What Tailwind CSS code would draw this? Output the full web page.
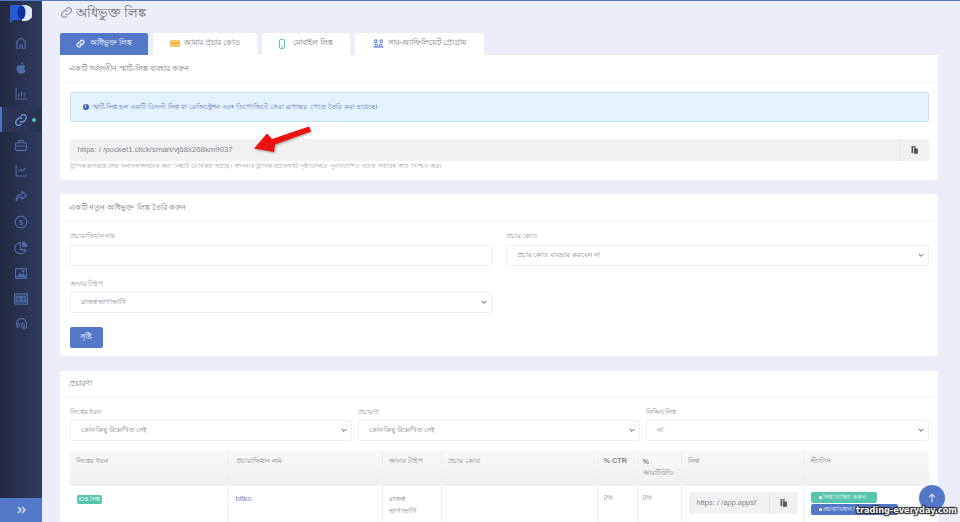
<!DOCTYPE html>
<html lang="bn">
<head>
<meta charset="utf-8">
<script src="https://cdn.jsdelivr.net/npm/@tailwindcss/browser@4"></script>
</head>
<body class="h-[522px] w-[960px] overflow-hidden bg-[#ebeef8] font-['Liberation_Sans','Noto_Sans',sans-serif] text-[#777a80]">
<div class="relative flex h-[522px] w-[960px] overflow-hidden border-t-[1.5px] border-[#5478c8]">
  <aside class="flex h-full w-[42px] shrink-0 flex-col bg-gradient-to-r from-[#222840] to-[#2e3d5f] text-[#4f6ba8]">
    <div class="flex h-[29px] items-start justify-center pt-[4px]">
      <svg width="22" height="18" viewBox="0 0 22 18"><path d="M12 0h3a8 8 0 0 1 0 16h-3z" fill="#dfe8fb"/><path d="M0 0h12v15l-9 0-3 3z" fill="#2a5bd7"/><ellipse cx="11.500" cy="7.500" rx="4" ry="7" fill="#0f2f9e"/></svg>
    </div>
    <nav class="flex flex-col">
      <a class="flex h-[25.6px] items-center justify-center"><svg width="14" height="14" viewBox="0 0 24 24" fill="none" stroke="currentColor" stroke-width="2"><path d="M3 11l9-8 9 8M5 9v12h5v-6h4v6h5V9"/></svg></a>
      <a class="flex h-[25.6px] items-center justify-center"><svg width="13" height="14" viewBox="0 0 24 24" fill="currentColor"><path d="M17 12.500c0-2.600 2.100-3.800 2.200-3.900-1.200-1.800-3.100-2-3.800-2-1.600-.2-3.100 1-3.900 1s-2-.9-3.400-.9C6.300 6.700 4.700 7.700 3.800 9.200c-1.800 3.200-.5 7.900 1.300 10.500.9 1.300 1.900 2.700 3.300 2.600 1.300 0 1.800-.8 3.400-.8s2 .8 3.400.8 2.300-1.300 3.200-2.600c1-1.500 1.400-2.900 1.400-3-.1 0-2.800-1.100-2.800-4.200zM14.400 4.700c.7-.9 1.200-2.100 1.100-3.300-1 0-2.300.7-3 1.500-.7.800-1.200 2-1.100 3.200 1.200.1 2.300-.5 3-1.400z"/></svg></a>
      <a class="flex h-[25.6px] items-center justify-center"><svg width="13" height="13" viewBox="0 0 24 24" fill="none" stroke="currentColor" stroke-width="2"><path d="M2 2v20h20M7 18v-6M12 18V8M17 18v-8"/></svg></a>
      <a class="relative flex h-[25.6px] items-center justify-center border-l-2 border-[#4f73c4] bg-[#2b3553] pr-[2px] text-[#6f8fd6]"><svg width="14" height="14" viewBox="0 0 24 24" fill="none" stroke="currentColor" stroke-width="2.400"><path d="M10 14a5 5 0 0 0 7 0l3-3a5 5 0 0 0-7-7l-1.500 1.500"/><path d="M14 10a5 5 0 0 0-7 0l-3 3a5 5 0 0 0 7 7l1.500-1.500"/></svg><span class="absolute left-[30px] top-[11px] size-1 rounded-full bg-[#4fc9a8]"></span></a>
      <a class="flex h-[25.6px] items-center justify-center"><svg width="14" height="13" viewBox="0 0 24 24" fill="none" stroke="currentColor" stroke-width="2"><rect x="2" y="7" width="20" height="14" rx="2"/><path d="M8 7V3h8v4M2 13h20"/></svg></a>
      <a class="flex h-[25.6px] items-center justify-center"><svg width="13" height="13" viewBox="0 0 24 24" fill="none" stroke="currentColor" stroke-width="2"><path d="M2 2v20h20M6 15l5-5 3 3 6-6"/></svg></a>
      <a class="flex h-[25.6px] items-center justify-center"><svg width="14" height="13" viewBox="0 0 24 24" fill="none" stroke="currentColor" stroke-width="2.200"><path d="M14 3l8 7-8 7v-4c-5 0-8 1-11 7 0-7 4-12 11-13z"/></svg></a>
      <a class="flex h-[25.6px] items-center justify-center"><svg width="14" height="14" viewBox="0 0 24 24" fill="none" stroke="currentColor" stroke-width="2"><circle cx="12" cy="12" r="10"/><text x="12" y="17" text-anchor="middle" font-size="13" font-family="Liberation Sans" fill="currentColor" stroke="none" font-weight="700">$</text></svg></a>
      <a class="flex h-[25.6px] items-center justify-center"><svg width="14" height="14" viewBox="0 0 24 24" fill="none" stroke="currentColor" stroke-width="2.200"><path d="M11 3a9.500 9.500 0 1 0 9 12h-9z"/><path d="M15 2a7 7 0 0 1 7 7h-7z" fill="currentColor"/></svg></a>
      <a class="flex h-[25.6px] items-center justify-center"><svg width="14" height="13" viewBox="0 0 24 24" fill="none" stroke="currentColor" stroke-width="2"><rect x="2" y="3" width="20" height="18" rx="1"/><path d="M5 18l5-6 3 3 3-2 4 5z" fill="currentColor"/><circle cx="16" cy="8" r="1.500" fill="currentColor"/></svg></a>
      <a class="flex h-[25.6px] items-center justify-center"><svg width="14" height="12" viewBox="0 0 24 20" fill="none" stroke="currentColor" stroke-width="2"><rect x="1" y="1" width="22" height="18" rx="1" fill="currentColor" fill-opacity=".4"/><rect x="5" y="6" width="6" height="8"/><rect x="13" y="6" width="6" height="8"/></svg></a>
      <a class="flex h-[25.6px] items-center justify-center"><svg width="13" height="14" viewBox="0 0 24 24" fill="none" stroke="currentColor" stroke-width="2.200"><path d="M3 14v-3a9 9 0 0 1 18 0v5a4 4 0 0 1-4 4h-3"/><rect x="3" y="11" width="5" height="7" rx="2"/><rect x="12" y="11" width="5" height="7" rx="2"/></svg></a>
    </nav>
    <div class="mt-auto flex h-[24px] items-center justify-center bg-[#5478c8] text-[#e6ecfa]"><svg width="9" height="8" viewBox="0 0 18 16" fill="none" stroke="currentColor" stroke-width="2.600"><path d="M2 2l6 6-6 6M10 2l6 6-6 6"/></svg></div>
  </aside>

  <main class="min-w-0 flex-1 pl-[18px] pr-[22px]">
    <div class="flex h-[31.5px] items-start gap-[3px] pt-[4px] text-[12.500px] leading-[16px] text-[#64686e]">
      <svg class="mt-[1px]" width="13" height="13" viewBox="0 0 24 24" fill="none" stroke="#8a93a5" stroke-width="2.200"><path d="M10 14a5 5 0 0 0 7 0l3-3a5 5 0 0 0-7-7l-1.500 1.500"/><path d="M14 10a5 5 0 0 0-7 0l-3 3a5 5 0 0 0 7 7l1.500-1.500"/></svg>
      <h1>অধিভুক্ত লিঙ্ক</h1>
    </div>
    <div class="flex h-[22px] gap-[5px] text-[8.200px]">
      <a class="flex w-[88px] items-center justify-center gap-[5px] rounded-t-[2px] bg-[#5478c8] text-white"><svg width="9" height="9" viewBox="0 0 24 24" fill="none" stroke="currentColor" stroke-width="3"><path d="M10 14a5 5 0 0 0 7 0l3-3a5 5 0 0 0-7-7l-1.500 1.500"/><path d="M14 10a5 5 0 0 0-7 0l-3 3a5 5 0 0 0 7 7l1.500-1.500"/></svg>অধিভুক্ত লিঙ্ক</a>
      <a class="flex w-[104px] items-center justify-center gap-[4px] rounded-t-[2px] bg-white"><svg width="10" height="7" viewBox="0 0 20 14"><rect width="20" height="14" rx="1" fill="#f7c86c"/><rect x="0" y="5" width="20" height="3" fill="#eeb04a"/></svg>আমার প্রচার কোড</a>
      <a class="flex w-[88px] items-center justify-center gap-[8px] rounded-t-[2px] bg-white"><svg width="6" height="10" viewBox="0 0 12 20" fill="none" stroke="#58c6ac" stroke-width="2"><rect x="1" y="1" width="10" height="18" rx="2"/><path d="M4 16h4"/></svg>মোবাইল লিঙ্ক</a>
      <a class="flex w-[129px] items-center justify-center gap-[4px] rounded-t-[2px] bg-white"><svg width="11" height="9" viewBox="0 0 24 20" fill="none" stroke="#6f8fd6" stroke-width="2.400"><circle cx="6" cy="5" r="3"/><circle cx="18" cy="5" r="3"/><circle cx="7" cy="14" r="3"/><circle cx="17" cy="14" r="3"/><path d="M1 19c1-2 10-2 11 0M12 19c1-2 10-2 11 0"/></svg>সাব-অ্যাফিলিয়েট প্রোগ্রাম</a>
    </div>

    <section class="rounded-b-[2px] bg-white">
      <header class="flex h-[28px] items-center border-b border-[#f4f5f8] px-[9px] pt-[1px] text-[7.800px]">একটি সর্বজনীন স্মার্ট-লিঙ্ক ব্যবহার করুন</header>
      <div class="px-[9.500px] pt-[9px]">
        <div class="flex h-[30px] items-center gap-[3px] rounded-[2px] border border-[#bee5f7] bg-[#e4f2fd] pl-[12px] text-[7.400px] text-[#5f78b5]">
          <span class="flex size-[6px] items-center justify-center rounded-full bg-[#3f62ad] text-[5px] font-bold text-white">i</span>
          স্মার্ট-লিঙ্ক হল একটি ডিফল্ট লিঙ্ক যা রেজিস্ট্রেশন এবং ডিপোজিটে সেরা রূপান্তর পেতে তৈরি করা হয়েছে।
        </div>
        <div class="mt-[17px] flex h-[22px] rounded-[2px] bg-[#f1f1f1]">
          <div class="flex flex-1 items-center pl-[8px] text-[7.800px] text-[#85888e]">https: / /pocket1.click/smart/vj68x268km9037</div>
          <div class="flex w-[30px] items-center justify-center border-l border-[#e8e8e8]"><svg width="9" height="10" viewBox="0 0 24 24" fill="#555"><path d="M4 2h12v3H8v15H4z"/><path d="M10 7h8l3 3v12H10z"/></svg></div>
        </div>
        <p class="pb-[10px] text-[6.200px] leading-[9px] text-[#a0a3a8]">ট্রাফিক রূপান্তরে সেরা ফলাফল অর্জনের জন্য লিঙ্কটি তৈরি করা হয়েছে। আপনার ট্রাফিক ওয়েবসাইট পৃষ্ঠাগুলিতে পুনর্নির্দেশিত হবে যা সর্বাধিক আয় নিশ্চিত করে।</p>
      </div>
    </section>

    <section class="mt-[14px] h-[162px] rounded-[2px] bg-white">
      <header class="flex h-[27px] items-center border-b border-[#f4f5f8] px-[9px] pt-[2px] text-[7.900px]">একটি নতুন অধিভুক্ত লিঙ্ক তৈরি করুন</header>
      <div class="px-[9.500px] pt-[7px]">
        <div class="grid grid-cols-[422px_423px] gap-x-[14px]">
          <div>
            <label class="block h-[17px] text-[7px] leading-[15px] text-[#8f9298]">প্রচারাভিযান নাম</label>
            <div class="h-[21px] rounded-[2px] border border-[#eef0f3]"></div>
          </div>
          <div>
            <label class="block h-[17px] text-[7px] leading-[15px] text-[#8f9298]">প্রচার কোড</label>
            <div class="flex h-[21px] items-center justify-between rounded-[2px] border border-[#eef0f3] pl-[10px] pr-[3px] text-[7.100px] text-[#808389]">প্রচার কোড ব্যবহার করবেন না<svg width="8" height="8" viewBox="0 0 24 24" fill="none" stroke="#555" stroke-width="3"><path d="M5 9l7 7 7-7"/></svg></div>
          </div>
          <div class="mt-[10px]">
            <label class="block h-[16px] text-[7px] leading-[16px] text-[#8f9298]">অফার টাইপ</label>
            <div class="flex h-[21px] items-center justify-between rounded-[2px] border border-[#eef0f3] pl-[10px] pr-[3px] text-[7.100px] text-[#808389]">রাজস্ব ভাগাভাগি<svg width="8" height="8" viewBox="0 0 24 24" fill="none" stroke="#555" stroke-width="3"><path d="M5 9l7 7 7-7"/></svg></div>
          </div>
        </div>
        <button class="mt-[14px] h-[21px] w-[33px] rounded-[2px] bg-[#5478c8] text-[7.500px] text-white">সৃষ্টি</button>
      </div>
    </section>

    <section class="mt-[15px] rounded-[2px] bg-white">
      <header class="flex h-[26px] items-center border-b border-[#f4f5f8] px-[9px] pt-[1px] text-[7.500px]">প্রচারণা</header>
      <div class="px-[9.500px] pt-[7px]">
        <div class="grid grid-cols-[282px_282px_283px] gap-x-[6px]">
          <div>
            <label class="block h-[16px] text-[7px] leading-[15px] text-[#8f9298]">লিঙ্কের ধরন</label>
            <div class="flex h-[21px] items-center justify-between rounded-[2px] border border-[#eef0f3] pl-[10px] pr-[3px] text-[7.100px] text-[#808389]">কোন কিছু উল্লেখিত নেই<svg width="8" height="8" viewBox="0 0 24 24" fill="none" stroke="#555" stroke-width="3"><path d="M5 9l7 7 7-7"/></svg></div>
          </div>
          <div>
            <label class="block h-[16px] text-[7px] leading-[15px] text-[#8f9298]">প্রচারণা</label>
            <div class="flex h-[21px] items-center justify-between rounded-[2px] border border-[#eef0f3] pl-[10px] pr-[3px] text-[7.100px] text-[#808389]">কোন কিছু উল্লেখিত নেই<svg width="8" height="8" viewBox="0 0 24 24" fill="none" stroke="#555" stroke-width="3"><path d="M5 9l7 7 7-7"/></svg></div>
          </div>
          <div>
            <label class="block h-[16px] text-[7px] leading-[15px] text-[#8f9298]">নিষ্ক্রিয় লিঙ্ক</label>
            <div class="flex h-[21px] items-center justify-between rounded-[2px] border border-[#eef0f3] pl-[10px] pr-[3px] text-[7.100px] text-[#808389]">না<svg width="8" height="8" viewBox="0 0 24 24" fill="none" stroke="#555" stroke-width="3"><path d="M5 9l7 7 7-7"/></svg></div>
          </div>
        </div>
        <div class="mt-[9px] grid grid-cols-[159px_154px_59px_156px_40px_44px_122px_125px] text-[7.300px] text-[#7f8288]">
          <div class="h-[36px] border-r border-[#eceef0] bg-gradient-to-b from-[#f9f9f9] to-[#f0f0f0] pl-[6px] pt-[6px]">লিঙ্কের ধরন</div>
          <div class="h-[36px] border-r border-[#eceef0] bg-gradient-to-b from-[#f9f9f9] to-[#f0f0f0] pl-[7px] pt-[6px]">প্রচারাভিযান নাম</div>
          <div class="h-[36px] border-r border-[#eceef0] bg-gradient-to-b from-[#f9f9f9] to-[#f0f0f0] pl-[6px] pt-[6px]">অফার টাইপ</div>
          <div class="h-[36px] border-r border-[#eceef0] bg-gradient-to-b from-[#f9f9f9] to-[#f0f0f0] pl-[6px] pt-[6px]">প্রচার কোড</div>
          <div class="h-[36px] border-r border-[#eceef0] bg-gradient-to-b from-[#f9f9f9] to-[#f0f0f0] pl-[6px] pt-[6px] font-bold">% CTR</div>
          <div class="h-[36px] border-r border-[#eceef0] bg-gradient-to-b from-[#f9f9f9] to-[#f0f0f0] pl-[5px] pt-[6px] leading-[11px]"><b>%</b><br>আরটিউডি</div>
          <div class="h-[36px] border-r border-[#eceef0] bg-gradient-to-b from-[#f9f9f9] to-[#f0f0f0] pl-[6px] pt-[6px]">লিঙ্ক</div>
          <div class="h-[36px] bg-gradient-to-b from-[#f9f9f9] to-[#f0f0f0] pl-[6px] pt-[6px]">স্ট্যাটাস</div>

          <div class="h-[40px] border-r border-[#eceef0] pl-[7px] pt-[8px]"><span class="inline-block h-[9px] rounded-[2px] bg-[#58c6ac] px-[2px] text-[6px] leading-[9px] text-white">iOS লিঙ্ক</span></div>
          <div class="h-[40px] border-r border-[#eceef0] pl-[7px] pt-[7px] text-[7.500px] text-[#6f86c8]">bttko</div>
          <div class="h-[40px] border-r border-[#eceef0] pl-[6px] pt-[7px] leading-[12px]">রাজস্ব<br>ভাগাভাগি</div>
          <div class="h-[40px] border-r border-[#eceef0]"></div>
          <div class="h-[40px] border-r border-[#eceef0] pl-[6px] pt-[7px] text-[6.500px] text-[#9a9da2]">0%</div>
          <div class="h-[40px] border-r border-[#eceef0] pl-[5px] pt-[7px] text-[6.500px] text-[#9a9da2]">0%</div>
          <div class="h-[40px] border-r border-[#eceef0] pl-[7px] pt-[6px]">
            <div class="flex h-[22px] w-[109px] rounded-[2px] bg-[#f1f1f1] text-[7.500px] text-[#85888e]">
              <span class="flex w-[80px] items-center pl-[8px]">https: / /app.appsf</span>
              <span class="flex flex-1 items-center justify-center border-l border-[#e8e8e8]"><svg width="9" height="10" viewBox="0 0 24 24" fill="#555"><path d="M4 2h12v3H8v15H4z"/><path d="M10 7h8l3 3v12H10z"/></svg></span>
            </div>
          </div>
          <div class="h-[40px] pl-[7px] pt-[6px] text-[6px] leading-[11px] text-[#eef6f4]">
            <div class="flex h-[11px] w-[66px] items-center gap-[1px] rounded-[2px] bg-[#58c6ac] pl-[8px]"><span class="size-[3px] rounded-full bg-white"></span>লিঙ্ক নিষ্ক্রিয় করুন</div>
            <div class="mt-px flex h-[11px] w-[87px] items-center gap-[1px] rounded-[2px] bg-[#5478c8] pl-[8px]"><span class="size-[3px] rounded-full bg-white"></span>প্রচারাভিযান নিষ্ক্রিয়</div>
          </div>
        </div>
      </div>
    </section>
  </main>

  <a class="absolute left-[919px] top-[484px] flex size-[26px] items-center justify-center rounded-full bg-[#5478c8]"><svg width="10" height="10" viewBox="0 0 24 24" fill="none" stroke="#e6ecfa" stroke-width="2.500"><path d="M12 22V3M5 10l7-7 7 7"/></svg></a>
  <span class="absolute left-[856px] top-[503px] whitespace-nowrap font-['DejaVu_Sans',sans-serif] text-[8.200px] font-bold text-[#f2f2f2] [text-shadow:1px_1px_1px_#222,-1px_-1px_1px_#222,1px_-1px_1px_#222,-1px_1px_1px_#222]">trading-everyday.com</span>

  <svg class="absolute left-[252px] top-[124px] drop-shadow-[1px_1px_1px_rgba(0,0,0,0.35)]" width="62" height="30" viewBox="0 0 62 30"><path d="M2 23.500L15 8.500L20 14L57 1.500L59 6.500L23 19.500L22 27z" fill="#ee1111"/></svg>
</div>
</body>
</html>
